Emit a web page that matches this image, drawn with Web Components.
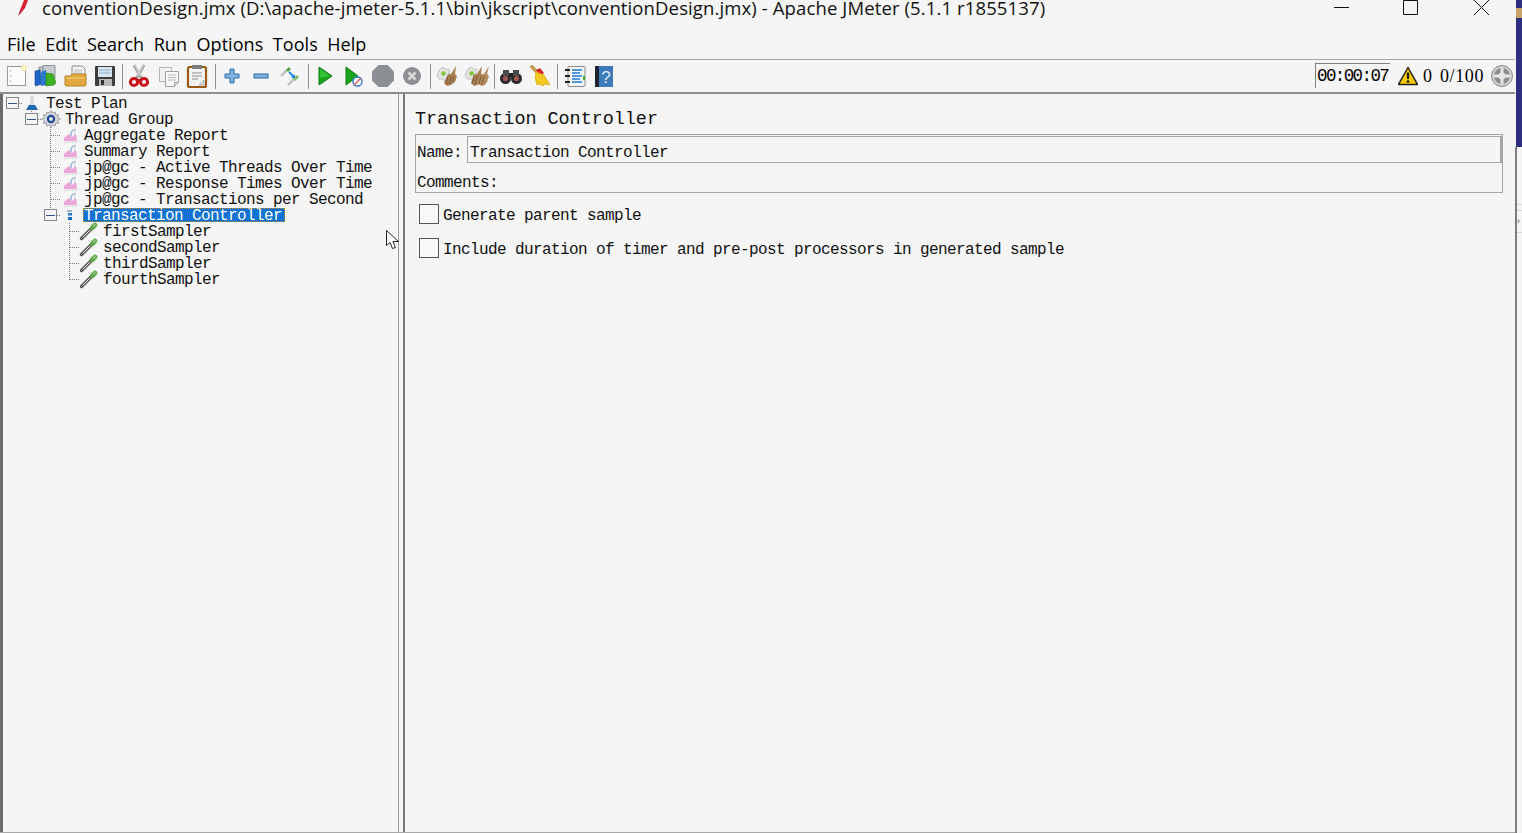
<!DOCTYPE html>
<html>
<head>
<meta charset="utf-8">
<title>Apache JMeter</title>
<style>
    html, body { margin: 0; padding: 0; height: 100%; background: #f5f5f5; overflow: hidden; }
</style>
</head>
<body>
<jm-app>
    <jm-titlebar slot="title">conventionDesign.jmx (D:\apache-jmeter-5.1.1\bin\jkscript\conventionDesign.jmx) - Apache JMeter (5.1.1 r1855137)</jm-titlebar>
    <jm-menubar slot="menu" items="File,Edit,Search,Run,Options,Tools,Help"></jm-menubar>
    <jm-toolbar slot="tools"></jm-toolbar>
    <jm-tree-node slot="tree" root label="Test Plan" icon="flask" open>
        <jm-tree-node label="Thread Group" icon="gear" open>
            <jm-tree-node label="Aggregate Report" icon="graph"></jm-tree-node>
            <jm-tree-node label="Summary Report" icon="graph"></jm-tree-node>
            <jm-tree-node label="jp@gc - Active Threads Over Time" icon="graph"></jm-tree-node>
            <jm-tree-node label="jp@gc - Response Times Over Time" icon="graph"></jm-tree-node>
            <jm-tree-node label="jp@gc - Transactions per Second" icon="graph"></jm-tree-node>
            <jm-tree-node label="Transaction Controller" icon="controller" open selected>
                <jm-tree-node label="firstSampler" icon="dropper"></jm-tree-node>
                <jm-tree-node label="secondSampler" icon="dropper"></jm-tree-node>
                <jm-tree-node label="thirdSampler" icon="dropper"></jm-tree-node>
                <jm-tree-node label="fourthSampler" icon="dropper"></jm-tree-node>
            </jm-tree-node>
        </jm-tree-node>
    </jm-tree-node>
    <jm-controller-panel slot="panel" heading="Transaction Controller" name="Transaction Controller"></jm-controller-panel>
</jm-app>

<script>
const BROOM_GEAR = '<path d="M5 5l3-2 3 2 3 0 0 9-4 3-3-2-3 0-2-4z" fill="#e2e2e2" stroke="#b4b4b4" stroke-width=".7"/><circle cx="8.500" cy="9.500" r="2.200" fill="#86c43a"/>';

const ICONS = {
    feather: '<path d="M12 0 L8 0 L3 13 L2 16 L5 13 L9 8 Z" fill="#d8202e"/><path d="M4 12 L3 15 L6 11 Z" fill="#7a2a90"/>',
    new: '<rect x="2.500" y="2.500" width="18" height="19" fill="#fbfbfb" stroke="#9a9a9a"/><circle cx="19" cy="4" r="3" fill="#f4ec9c"/><circle cx="19" cy="4" r="1.500" fill="#fff"/><path d="M5 7h1M5 12h1M5 17h1" stroke="#888"/>',
    templates: '<g transform="translate(-1 0)"><path d="M6 3h13v13H6z" fill="#b6bcc2" stroke="#8a9096"/><path d="M10 1.500h12v13H10z" fill="#c6ccd0" stroke="#8a9096"/><path d="M2 7l5-1 1 14-5 2-1-1z" fill="#1b63c4" stroke="#15408a" stroke-width=".6"/><path d="M8 8l5-2 1 15-6 1z" fill="#2a7ad0"/><path d="M13 9l7 1 3 9-2 2-8 1z" fill="#3cb01e" stroke="#2a7d14" stroke-width=".6"/></g>',
    folder: '<path d="M8 2h10l3 3v8H8z" fill="#f4f4f4" stroke="#8c8c8c"/><path d="M10 6h8M10 8h8M10 10h8" stroke="#aab" stroke-width=".8"/><path d="M1 12h6l1-2h14v11l-1 1H2l-1-1z" fill="#e3a93e" stroke="#b3832c"/><path d="M2 14h19" stroke="#f2d28a"/>',
    save: '<rect x="2" y="2" width="20" height="20" rx="1" fill="#3d3d3d"/><rect x="5" y="3" width="14" height="10" fill="#d9e4ee"/><path d="M6 6h12M6 9h12" stroke="#8ab2d4"/><rect x="6" y="15" width="13" height="7" fill="#b9b9b9"/><rect x="8" y="16" width="3" height="5" fill="#333"/>',
    cut: '<path d="M7 1 L15 15 M17 1 L9 15" stroke="#a9a9a9" stroke-width="3" fill="none"/><path d="M8 1l6 11M16 1l-6 11" stroke="#e2e2e2" fill="none"/><circle cx="7" cy="18" r="3.600" fill="none" stroke="#c8131b" stroke-width="3"/><circle cx="17" cy="18" r="3.600" fill="none" stroke="#c8131b" stroke-width="3"/><path d="M9 15h6v2H9z" fill="#c8131b"/>',
    copy: '<path d="M2.500 3.500h12v14h-12z" fill="#f2f2f2" stroke="#b5b5b5"/><path d="M8.500 7.500h13v11l-4 4h-9z" fill="#f8f8f8" stroke="#a0a0a0"/><path d="M11 11h8M11 13.500h8M11 16h8" stroke="#b4b4b4"/><path d="M17.500 22.500v-4h4" fill="#d4d4d4" stroke="#a0a0a0"/>',
    paste: '<g transform="translate(-1 0)"><rect x="3" y="3" width="18" height="20" rx="1.500" fill="#f4f4f4" stroke="#9c5a16" stroke-width="2.200"/><rect x="7" y="1" width="10" height="4" fill="#7d7d7d"/><path d="M7 9h10M7 12h10M7 15h6" stroke="#8d8d8d"/><path d="M14 21l5-5v5z" fill="#ddd" stroke="#999" stroke-width=".6"/></g>',
    plus: '<path d="M10 5h4v5h5v4h-5v5h-4v-5H5v-4h5z" fill="#7fb2e0" stroke="#2a6cae"/>',
    minus: '<g transform="translate(-1 0)"><rect x="5" y="10" width="14" height="4" fill="#7fb2e0" stroke="#2a6cae"/></g>',
    toggle: '<g transform="translate(-1 0)"><path d="M3 12l6-6" stroke="#c4c4c4" stroke-width="2.500"/><path d="M9 7l3-3" stroke="#5da14a" stroke-width="3"/><path d="M10 21l6-6" stroke="#c4c4c4" stroke-width="2.500"/><path d="M16 16l4-4" stroke="#8ab86f" stroke-width="3"/><path d="M11 8l5 5" stroke="#1f86e0" stroke-width="1.800"/><path d="M17 14h-4l4-4z" fill="#1f86e0"/></g>',
    run: '<path d="M6 3 L19 12 L6 21 Z" fill="#1aa51a" stroke="#0f7a12"/><path d="M7 5l10 7-10 2z" fill="#35c335"/>',
    runNoTimer: '<g transform="translate(-1 0)"><path d="M4 3 L16 12 L4 21 Z" fill="#1aa51a" stroke="#0f7a12"/><circle cx="15.500" cy="17.500" r="4.500" fill="#fff" stroke="#3579d4" stroke-width="1.400"/><path d="M12 21l7-7" stroke="#d05050" stroke-width="1.200"/></g>',
    stop: '<g transform="translate(-1 0)"><path d="M7.500 1h9L23 7.500v9L16.500 23h-9L1 16.500v-9z" fill="#8c8f94"/></g>',
    shutdown: '<g transform="translate(-2 0)"><circle cx="12" cy="12" r="9" fill="#8c8f94"/><path d="M8.500 8.500l7 7M15.500 8.500l-7 7" stroke="#d9d9d9" stroke-width="2.600"/></g>',
    clear: `<g transform="translate(-1 0)">${BROOM_GEAR}<path d="M21 2l-5 8-3 0-4 9 3 3 4-1 4-3 2-6-2-2z" fill="#a98054"/><path d="M13 12l-2 8M16 12l-2 8M19 12l-2 6" stroke="#7d5a38"/></g>`,
    clearAll: `<g transform="translate(-2 0)">${BROOM_GEAR}<path d="M19 2l-5 8-3 0-3 9 3 3 4-1 3-3 2-6-2-2z" fill="#a98054"/><path d="M26 2l-5 8-3 0-3 9 3 3 4-1 2-3 2-6-2-2z" fill="#b48b5e"/><path d="M11 12l-2 8M14 12l-2 8M18 12l-2 8M21 12l-2 8" stroke="#7d5a38"/></g>`,
    search: '<circle cx="6.500" cy="14.500" r="5.500" fill="#2a2a2a"/><circle cx="17.500" cy="14.500" r="5.500" fill="#2a2a2a"/><rect x="4" y="6" width="6" height="6" fill="#4a4a4a"/><rect x="14" y="6" width="6" height="6" fill="#4a4a4a"/><rect x="10" y="9" width="4" height="4" fill="#222"/><circle cx="6.500" cy="14.500" r="2.600" fill="#a0564e"/><circle cx="17.500" cy="14.500" r="2.600" fill="#a0564e"/>',
    reset: '<g transform="translate(-1 0)"><path d="M4 1l6 6-2 2-6-6z" fill="#cfa24e" stroke="#9a6f28" stroke-width=".6"/><path d="M8 6l4-2 4 5-3 3z" fill="#d8262a"/><path d="M8 8l8 3 6 10-5-1-2 2-3-2-3 1-2-7z" fill="#f2c81e" stroke="#cf9f10" stroke-width=".6"/></g>',
    functions: '<rect x="5" y="2.500" width="17" height="20" rx="1" fill="#f6f6f6" stroke="#8a8a8a"/><path d="M2 6h5M2 12h5M2 18h5" stroke="#222" stroke-width="1.800"/><path d="M9 6h10M9 9h8M9 12h10M9 15h8M9 18h10" stroke="#1a78d8" stroke-width="1.400"/><rect x="20" y="12" width="2" height="4" fill="#3cb01e"/>',
    help: '<rect x="3" y="2" width="18" height="21" fill="#3f7bb8"/><rect x="3" y="2" width="4" height="21" fill="#1c2530"/><text x="14" y="19" font-family="Liberation Sans, sans-serif" font-size="17" text-anchor="middle" fill="#d6e6f6">?</text>',
    warning: '<path d="M10 1.500 L19.500 18.500 H.5 Z" fill="#f8cc00" stroke="#222" stroke-width="1.500" stroke-linejoin="round"/><path d="M10 6.500v6.500" stroke="#111" stroke-width="2.200"/><circle cx="10" cy="15.500" r="1.300" fill="#111"/>',
    flask: '<path d="M6 1h2v6l4 6H2l4-6z" fill="#dfe3ea" stroke="#b7bcc6" stroke-width=".6"/><path d="M4 9h6l3 5H1z" fill="#2266b4"/>',
    gear: '<path d="M9 .5l1.500 2.500 2.800-1 .4 3 3-.3-1 2.800 2.600 1.500-2.600 1.500 1 2.800-3-.3-.4 3-2.800-1L9 17.500 7.500 15l-2.800 1-.4-3-3 .3 1-2.800L-.3 9l2.600-1.500-1-2.800 3 .3.400-3 2.800 1z" fill="#d4d6d9" stroke="#85888e" stroke-width=".7"/><circle cx="9" cy="9" r="4.200" fill="#1f4a90"/><circle cx="9" cy="9" r="2" fill="#dfe5ee"/>',
    graph: '<path d="M1 13 L1 10 L6 6 L9 9 L13 6 L14 13 Z" fill="#e9a6d2"/><path d="M8.500 8a4 4 0 0 1 4.500-6" stroke="#a4b9da" stroke-width="1.500" fill="none"/><path d="M11.500 3v4" stroke="#c6d5ea"/><path d="M0 14h15" stroke="#dcdcdc"/>',
    controller: '<path d="M1 1h5v2H1z" fill="#9fb4c8"/><path d="M2 4h4v2.500H2z" fill="#1f7bd8"/><path d="M2 8h4v3H2z" fill="#1566c0"/>',
    dropper: '<path d="M1.500 16.500 L11 7" stroke="#5c5c5c" stroke-width="3.400" stroke-linecap="round"/><path d="M2.500 15.500 L10 8" stroke="#ececec" stroke-width="1"/><path d="M12 6l3-3" stroke="#62a84e" stroke-width="4.600" stroke-linecap="round"/><path d="M13.500 4l1.500-1.500" stroke="#b4dca0" stroke-width="1.300"/>'
};

function svgIcon(name, w, h) {
    return `<svg xmlns="http://www.w3.org/2000/svg" width="${w}" height="${h}" viewBox="0 0 ${w} ${h}">${ICONS[name]}</svg>`;
}

class JmApp extends HTMLElement {
    connectedCallback() {
        this.attachShadow({ mode: 'open' });
        this.shadowRoot.innerHTML = `
            <style>
                :host {
                    display: flex;
                    width: 1522px;
                    height: 833px;
                    overflow: hidden;
                    background: #f5f5f5;
                    color: #000;
                }
                .window {
                    width: 1515px;
                    display: flex;
                    flex-direction: column;
                }
                .split {
                    flex: 1;
                    min-height: 0;
                    display: flex;
                    border-bottom: 1px solid #a8a8a8;
                }
                .left {
                    width: 395px;
                    border-left: 3px solid #6c6c70;
                    border-right: 1px solid #999;
                    overflow: hidden;
                    padding-top: 1px;
                }
                .divider { width: 4px; }
                .right {
                    flex: 1;
                    min-width: 0;
                    border-left: 2px solid #77777b;
                }
                .cursor {
                    position: absolute;
                    left: 386px;
                    top: 230px;
                }
            </style>
            <div class="window">
                <slot name="title"></slot>
                <slot name="menu"></slot>
                <slot name="tools"></slot>
                <div class="split">
                    <div class="left"><slot name="tree"></slot></div>
                    <div class="divider"></div>
                    <div class="right"><slot name="panel"></slot></div>
                </div>
            </div>
            <jm-desktop-edge></jm-desktop-edge>
            <svg class="cursor" width="14" height="20" viewBox="0 0 14 20">
                <path d="M.5 .5 V15.500 L4 12.500 L6.500 18.500 L9.500 17.500 L7 11.500 H12.500 Z" fill="#fff" stroke="#222"/>
            </svg>
        `;
    }
}

class JmDesktopEdge extends HTMLElement {
    connectedCallback() {
        this.attachShadow({ mode: 'open' });
        this.shadowRoot.innerHTML = `
            <style>
                :host { display: flex; flex-direction: column; width: 7px; height: 833px; }
                .blue { height: 147px; margin-left: 1px; background: #2e2f80; flex: none; overflow: hidden; }
                .tag { height: 10px; margin-top: 8px; background: #c9a468; width: 6px; }
                .line { border-left: 2px solid #7c7c80; flex: 1; }
                .rule { height: 1px; background: #d8d8d8; }
                .gap-a { height: 57px; }
                .gap-b { height: 5px; }
                .mark { height: 21px; color: #888; font: bold 9px/21px "Liberation Sans", sans-serif; }
            </style>
            <div class="blue"><div class="tag"></div></div>
            <div class="line">
                <div class="gap-a"></div>
                <div class="rule"></div>
                <div class="gap-b"></div>
                <div class="rule"></div>
                <div class="mark">&#8250;</div>
                <div class="rule"></div>
            </div>
        `;
    }
}

class JmTitlebar extends HTMLElement {
    connectedCallback() {
        this.attachShadow({ mode: 'open' });
        this.shadowRoot.innerHTML = `
            <style>
                :host {
                    display: flex;
                    height: 30px;
                    overflow: hidden;
                    font: 18.500px/16px "Open Sans", "Noto Sans", sans-serif;
                    color: #111;
                }
                .logo { margin-left: 16px; width: 26px; flex: none; }
                .text { flex: 1; white-space: nowrap; letter-spacing: 0.120px; }
                .ctl { display: flex; flex: none; gap: 54px; height: 16px; margin-right: 25px; }
                .ctl svg { display: block; }
                .max { margin: 0 1px 0 -1px; }
            </style>
            <div class="logo">${svgIcon('feather', 14, 16)}</div>
            <div class="text"><slot></slot></div>
            <div class="ctl">
                <svg width="16" height="16"><path d="M0 7.500h15" stroke="#111"/></svg>
                <svg class="max" width="16" height="16"><path d="M.5 .5h14v14H.5z" fill="none" stroke="#111"/></svg>
                <svg width="16" height="16"><path d="M0 0l15 15M15 0L0 15" stroke="#111"/></svg>
            </div>
        `;
    }
}

class JmMenubar extends HTMLElement {
    connectedCallback() {
        this.attachShadow({ mode: 'open' });
        const items = this.getAttribute('items').split(',');
        this.shadowRoot.innerHTML = `
            <style>
                :host {
                    display: flex;
                    align-items: center;
                    gap: 9.500px;
                    height: 29px;
                    padding: 0 0 1px 7px;
                    box-sizing: border-box;
                    font: 18px "Open Sans", "Noto Sans", sans-serif;
                    letter-spacing: 0.050px;
                    color: #000;
                }
            </style>
            ${items.map(i => `<span>${i}</span>`).join('')}
        `;
    }
}

class JmTool extends HTMLElement {
    connectedCallback() {
        this.attachShadow({ mode: 'open' });
        this.shadowRoot.innerHTML = `
            <style>
                :host {
                    display: flex;
                    align-items: center;
                    justify-content: center;
                    width: 29.500px;
                    height: 24px;
                }
                svg { display: block; overflow: visible; }
            </style>
            ${svgIcon(this.getAttribute('icon'), 24, 24)}
        `;
    }
}

class JmToolbar extends HTMLElement {
    connectedCallback() {
        this.attachShadow({ mode: 'open' });
        const groups = [
            ['new', 'templates', 'folder', 'save'],
            ['cut', 'copy', 'paste'],
            ['plus', 'minus', 'toggle'],
            ['run', 'runNoTimer', 'stop', 'shutdown'],
            ['clear', 'clearAll'],
            ['search', 'reset'],
            ['functions', 'help']
        ];
        const tools = groups
            .map(g => g.map(n => `<jm-tool icon="${n}"></jm-tool>`).join(''))
            .join('<span class="sep"></span>');
        this.shadowRoot.innerHTML = `
            <style>
                :host {
                    display: flex;
                    align-items: center;
                    height: 35px;
                    box-sizing: border-box;
                    padding-left: 2px;
                    border-top: 1px solid #a8a8a8;
                    border-bottom: 2px solid #8e8e8e;
                }
                .sep {
                    width: 1px;
                    height: 25px;
                    margin: 0 1.750px;
                    background: #8f8f8f;
                }
                .spring { flex: 1; }
                .timer {
                    width: 75px;
                    height: 25px;
                    box-sizing: border-box;
                    border-top: 1px solid #7f7f7f;
                    border-left: 1px solid #7f7f7f;
                    padding-left: 1px;
                    font: 17.500px/24px "Liberation Mono", monospace;
                    letter-spacing: -1.600px;
                    margin-top: -1px;
                }
                .warn { display: block; margin-left: 8px; }
                .num {
                    font: 18px/24px "Liberation Serif", serif;
                    color: #000;
                }
                .err { margin-left: 5px; }
                .count { margin-left: 8px; letter-spacing: 0.600px; }
                .log { display: block; margin-left: 7px; margin-right: 2px; }
            </style>
            ${tools}
            <div class="spring"></div>
            <div class="timer">00:00:07</div>
            <svg class="warn" width="20" height="20">${ICONS.warning}</svg>
            <span class="num err">0</span>
            <span class="num count">0/100</span>
            <svg class="log" width="22" height="22" viewBox="0 0 22 22">
                <circle cx="11" cy="11" r="10.500" fill="#d2d2d2" stroke="#8a8a8a"/>
                <circle cx="11" cy="11" r="8" fill="#8c8c8c"/>
                <path d="M11 3v5M11 14v5M3 11h5M14 11h5" stroke="#e8e8e8" stroke-width="3"/>
                <circle cx="11" cy="11" r="3.500" fill="#e8e8e8"/>
            </svg>
        `;
    }
}

class JmTreeNode extends HTMLElement {
    connectedCallback() {
        this.attachShadow({ mode: 'open' });
        const open = this.hasAttribute('open');
        const selected = this.hasAttribute('selected');
        this.shadowRoot.innerHTML = `
            <style>
                :host {
                    display: block;
                    font: 16px/18px "Liberation Mono", monospace;
                    letter-spacing: -0.600px;
                    color: #111;
                    --dots: repeating-linear-gradient(to bottom, #777 0 1px, transparent 1px 2px);
                    background: var(--dots) 9px 0 / 1px 100% no-repeat;
                }
                :host(:last-child) { background-size: 1px 8px; }
                :host([root]) { background: none; }
                .row {
                    display: flex;
                    align-items: center;
                    height: 16px;
                }
                .joint {
                    flex: none;
                    width: 19px;
                    height: 16px;
                    display: flex;
                    align-items: center;
                    padding-left: 9px;
                    box-sizing: border-box;
                }
                .joint i {
                    display: block;
                    width: 10px;
                    height: 0;
                    border-top: 1px dotted #777;
                }
                .toggle {
                    flex: none;
                    box-sizing: border-box;
                    width: 13px;
                    height: 12px;
                    margin-left: -6px;
                    background: #f5f5f5;
                    border: 1px solid #85858c;
                    display: flex;
                    align-items: center;
                    justify-content: center;
                }
                .toggle::before {
                    content: "";
                    width: 9px;
                    height: 1px;
                    background: #33558a;
                }
                .stub { flex: 1; border-top: 1px dotted #777; }
                .icon {
                    flex: none;
                    width: 20px;
                    height: 16px;
                    display: flex;
                    align-items: center;
                    justify-content: center;
                }
                .icon svg { display: block; overflow: visible; }
                .label {
                    margin-left: 3px;
                    padding: 0 1px;
                    white-space: pre;
                    height: 16px;
                    clip-path: inset(0);
                }
                .label.sel {
                    height: 14px;
                    line-height: 16px;
                    clip-path: none;
                    padding: 0 3px 0 1px;
                    background: #0a72d6;
                    color: #fff;
                    outline: 1px dotted #d08a20;
                    outline-offset: -1px;
                }
                .kids { margin-left: 19px; }
            </style>
            <div class="row">
                <div class="joint">${open ? '<span class="toggle"></span><span class="stub"></span>' : '<i></i>'}</div>
                <div class="icon">${this.iconSvg()}</div>
                <div class="label ${selected ? 'sel' : ''}">${this.getAttribute('label')}</div>
            </div>
            <div class="kids"><slot></slot></div>
        `;
    }
    iconSvg() {
        const sizes = { flask: [14, 15], gear: [18, 18], graph: [15, 14], controller: [8, 12], dropper: [18, 18] };
        const name = this.getAttribute('icon');
        const [w, h] = sizes[name];
        return svgIcon(name, w, h);
    }
}

class JmCheckRow extends HTMLElement {
    connectedCallback() {
        this.attachShadow({ mode: 'open' });
        this.shadowRoot.innerHTML = `
            <style>
                :host {
                    display: flex;
                    align-items: center;
                    height: 20px;
                    margin-left: 4px;
                }
                .box {
                    flex: none;
                    box-sizing: border-box;
                    width: 20px;
                    height: 20px;
                    border: 1px solid #555;
                    background: #f8f8f8;
                    margin-right: 4px;
                }
                .t { white-space: pre; padding-top: 4px; }
            </style>
            <div class="box"></div>
            <div class="t"><slot></slot></div>
        `;
    }
}

class JmControllerPanel extends HTMLElement {
    connectedCallback() {
        this.attachShadow({ mode: 'open' });
        this.shadowRoot.innerHTML = `
            <style>
                :host {
                    display: block;
                    padding: 12px 12px 0 10px;
                    font: 16px/20px "Liberation Mono", monospace;
                    letter-spacing: -0.600px;
                    color: #111;
                }
                h1 {
                    margin: 0;
                    height: 28px;
                    font: 18.500px/28px "Liberation Mono", monospace;
                    letter-spacing: -0.060px;
                    font-weight: normal;
                }
                .group {
                    border: 1px solid #a6a6a6;
                    height: 59px;
                    box-sizing: border-box;
                    padding: 1px 0 0 1px;
                }
                .name { display: flex; align-items: center; height: 27px; }
                .name label { width: 50px; flex: none; padding-top: 6px; }
                .field {
                    flex: 1;
                    box-sizing: border-box;
                    height: 27px;
                    line-height: 18px;
                    padding: 7px 0 0 2px;
                    border: 1px solid #a6a6a6;
                    border-right-width: 2px;
                }
                .comments { height: 29px; box-sizing: border-box; padding-top: 11px; line-height: 18px; }
                .checks {
                    display: flex;
                    flex-direction: column;
                    gap: 14px;
                    margin-top: 11px;
                }
            </style>
            <h1>${this.getAttribute('heading')}</h1>
            <div class="group">
                <div class="name">
                    <label>Name:</label>
                    <div class="field">${this.getAttribute('name')}</div>
                </div>
                <div class="comments">Comments:</div>
            </div>
            <div class="checks">
                <jm-check-row>Generate parent sample</jm-check-row>
                <jm-check-row>Include duration of timer and pre-post processors in generated sample</jm-check-row>
            </div>
        `;
    }
}

customElements.define('jm-app', JmApp);
customElements.define('jm-desktop-edge', JmDesktopEdge);
customElements.define('jm-titlebar', JmTitlebar);
customElements.define('jm-menubar', JmMenubar);
customElements.define('jm-tool', JmTool);
customElements.define('jm-toolbar', JmToolbar);
customElements.define('jm-tree-node', JmTreeNode);
customElements.define('jm-check-row', JmCheckRow);
customElements.define('jm-controller-panel', JmControllerPanel);
</script>
</body>
</html>
